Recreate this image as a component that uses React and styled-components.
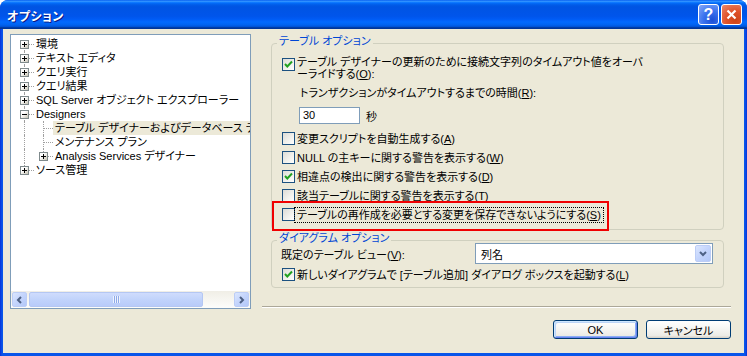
import React from "react";
import styled, { createGlobalStyle } from "styled-components";

const FONT = `"Liberation Sans", "Noto Sans CJK JP", sans-serif`;

const GlobalStyle = createGlobalStyle`
  html, body {
    margin: 0;
    padding: 0;
    background: #ffffff;
  }
  body {
    font-family: ${FONT};
    font-size: 11px;
    font-feature-settings: "palt";
    color: #000;
  }
  * {
    box-sizing: border-box;
  }
`;

const Window = styled.div`
    width: 747px;
    height: 356px;
    display: flex;
    flex-direction: column;
    border-radius: 8px 8px 0 0;
    overflow: hidden;
    background: linear-gradient(to right, #0831d9 0, #0855ea 2px, #0855ea calc(100% - 2px), #0831d9 100%);
`;

const TitleBar = styled.div`
    height: 29px;
    flex: none;
    display: flex;
    align-items: center;
    padding: 0 5px 0 7px;
    background: linear-gradient(to bottom, #0058ee 0%, #3593ff 4%, #288eff 6%, #127dff 8%, #036ffc 10%, #0262ee 14%, #0057e5 20%, #0054e3 24%, #0055eb 56%, #005bf5 66%, #026afe 76%, #0062ef 86%, #0052d6 92%, #0040ab 94%, #003092 100%);
`;

const TitleText = styled.div`
    flex: 1;
    color: #fff;
    font-weight: bold;
    font-size: 12px;
    letter-spacing: 0.5px;
    text-shadow: 1px 1px 0 #0a1883;
    padding-top: 1px;
`;

const CaptionButton = styled.div`
    width: 21px;
    height: 21px;
    margin-left: 2px;
    border: 1px solid #fff;
    border-radius: 3px;
    display: flex;
    align-items: center;
    justify-content: center;
    color: #fff;
    font-family: "Liberation Sans", sans-serif;
    font-weight: bold;
    font-size: 16px;
    background: ${({ $close }) => $close
        ? 'radial-gradient(circle at 70% 80%, #cc4418 0%, #e0522a 45%, #ec8a6e 100%)'
        : 'radial-gradient(circle at 70% 80%, #1b4fd6 0%, #3a72ee 45%, #86a9f8 100%)'};
`;

const Client = styled.div`
    flex: 1;
    margin: 0 3px 3px 3px;
    background: #ece9d8;
    padding: 5px 13px 0 7px;
    display: flex;
    flex-direction: column;
`;

const TopRow = styled.div`
    display: flex;
    height: 275px;
    flex: none;
`;

/* ---------- tree ---------- */

const TreeBox = styled.div`
    width: 241px;
    height: 275px;
    flex: none;
    border: 1px solid #7f9db9;
    background: #fff;
    display: flex;
    flex-direction: column;
`;

const TreeList = styled.div`
    flex: 1;
    overflow: hidden;
    padding: 2px 0 0 4px;
`;

const TreeRow = styled.div`
    height: 14px;
    display: flex;
    white-space: nowrap;
`;

const Guide = styled.span`
    position: relative;
    width: 19px;
    flex: none;
    &::before {
        content: "";
        display: ${({ $line }) => $line ? 'block' : 'none'};
        position: absolute;
        left: 9px;
        top: 0;
        bottom: 0;
        border-left: 1px dotted #a0a0a0;
    }
`;

const Joint = styled.span`
    position: relative;
    width: 19px;
    flex: none;
    &::before {
        content: "";
        position: absolute;
        left: 9px;
        top: ${({ $up }) => $up ? 0 : 7}px;
        bottom: ${({ $down }) => $down ? 0 : 7}px;
        border-left: 1px dotted #a0a0a0;
    }
    &::after {
        content: "";
        position: absolute;
        left: 10px;
        right: 0;
        top: 7px;
        border-top: 1px dotted #a0a0a0;
    }
`;

const Expander = styled.span`
    position: absolute;
    left: 5px;
    top: 3px;
    width: 9px;
    height: 9px;
    z-index: 1;
    border: 1px solid #7f8a8c;
    background: linear-gradient(135deg, #ffffff 35%, #c8c4b4 100%);
    &::before {
        content: "";
        position: absolute;
        left: 1px;
        top: 3px;
        width: 5px;
        height: 1px;
        background: #000;
    }
    &::after {
        content: "";
        display: ${({ $open }) => $open ? 'none' : 'block'};
        position: absolute;
        left: 3px;
        top: 1px;
        width: 1px;
        height: 5px;
        background: #000;
    }
`;

const TreeLabel = styled.span`
    line-height: 14px;
    padding: 0 2px;
    background: ${({ $selected }) => $selected ? '#ece9d8' : 'transparent'};
`;

const HScroll = styled.div`
    height: 17px;
    flex: none;
    display: flex;
    align-items: center;
    padding: 0 1px;
    gap: 2px;
    background: linear-gradient(to bottom, #f0eee6, #fdfdfb);
`;

const ScrollButton = styled.span`
    width: 15px;
    height: 15px;
    flex: none;
    display: flex;
    align-items: center;
    justify-content: center;
    border: 1px solid #bccdf6;
    border-radius: 2px;
    background: linear-gradient(135deg, #dbe6fe 0%, #c3d4fc 50%, #b3c8f8 100%);
`;

const Thumb = styled.span`
    width: ${({ $width }) => $width}px;
    height: 15px;
    flex: none;
    display: flex;
    align-items: center;
    justify-content: center;
    border: 1px solid #b4c7f3;
    border-radius: 2px;
    background: linear-gradient(to bottom, #cfdcfd 0%, #c1d3fb 50%, #b8cbf9 100%);
`;

const Grip = styled.span`
    width: 7px;
    height: 7px;
    background: repeating-linear-gradient(to right, #eef3fe 0, #eef3fe 1px, #8faae8 1px, #8faae8 2px);
`;

const ScrollTrack = styled.span`
    flex: 1;
`;

/* ---------- options side ---------- */

const Side = styled.div`
    flex: 1;
    margin-left: 11px;
    display: flex;
    flex-direction: column;
`;

const Group = styled.div`
    margin: ${({ $mt }) => $mt}px 7px 0 9px;
    border: 1px solid #d0d0bf;
    border-radius: 4px;
    padding-bottom: ${({ $pb }) => $pb}px;
`;

const GroupTitle = styled.div`
    width: fit-content;
    margin: -9px 0 0 5px;
    padding: 0 2px;
    line-height: 12px;
    background: #ece9d8;
    color: #0046d5;
`;

const CheckRow = styled.div`
    position: relative;
    display: flex;
    align-items: ${({ $top }) => $top ? 'flex-start' : 'center'};
    height: ${({ $top }) => $top ? 'auto' : '19px'};
    margin-top: ${({ $mt }) => $mt || 0}px;
    padding-left: 10px;
`;

const Box = styled.span`
    width: 13px;
    height: 13px;
    flex: none;
    margin-top: ${({ $mt }) => $mt || 0}px;
    border: 1px solid #1c5180;
    background: linear-gradient(135deg, #dcdcd7 0%, #f2f2ee 60%, #ffffff 100%);
    display: flex;
    align-items: center;
    justify-content: center;
`;

const Label = styled.span`
    padding: 0 2px;
    line-height: ${({ $lh }) => $lh || 14}px;
    white-space: nowrap;
    outline: ${({ $focus }) => $focus ? '1px dotted #000' : 'none'};
`;

const SubLabel = styled.div`
    margin-top: 6px;
    padding-left: 28px;
    line-height: 14px;
    white-space: nowrap;
`;

const InputRow = styled.div`
    display: flex;
    align-items: center;
    margin-top: 7px;
    padding-left: 27px;
    gap: 6px;
`;

const TextBox = styled.div`
    width: 61px;
    height: 17px;
    border: 1px solid #7f9db9;
    background: #fff;
    padding-left: 3px;
    line-height: 15px;
`;

const CheckList = styled.div`
    margin-top: 5px;
`;

const Annotation = styled.div`
    position: absolute;
    left: 0;
    top: -4px;
    width: 337px;
    height: 30px;
    border: 2px solid #f00000;
    pointer-events: none;
    z-index: 2;
`;

const ViewRow = styled.div`
    display: flex;
    align-items: center;
    height: 21px;
    margin-top: -1px;
    padding-left: 9px;
`;

const ViewLabel = styled.span`
    width: 194px;
    flex: none;
    white-space: nowrap;
`;

const Select = styled.div`
    width: 238px;
    height: 21px;
    border: 1px solid #7f9db9;
    background: #fff;
    display: flex;
    align-items: center;
    padding: 1px;
`;

const SelectValue = styled.span`
    flex: 1;
    padding-left: 4px;
`;

const DropButton = styled(ScrollButton)`
    width: 16px;
    height: 17px;
`;

const Separator = styled.div`
    margin-top: 18px;
    height: 2px;
    border-top: 1px solid #aca899;
    border-bottom: 1px solid #ffffff;
`;

const ButtonRow = styled.div`
    display: flex;
    justify-content: flex-end;
    gap: 8px;
    margin-top: 11px;
`;

const Button = styled.div`
    width: 85px;
    height: 19px;
    border: 1px solid #003c74;
    border-radius: 3px;
    display: flex;
    align-items: center;
    justify-content: center;
    background: linear-gradient(to bottom, #ffffff 0%, #f7f7f4 40%, #ecebe6 85%, #d6d0c5 100%);
    box-shadow: ${({ $default }) => $default
        ? 'inset 1px 1px 0 #cee7ff, inset -1px -1px 0 #6982ee, inset 2px 2px 0 #bcd4f6, inset -2px -2px 0 #89adf4'
        : 'none'};
`;

const Check = () => (
    <svg width="11" height="11" viewBox="0 0 11 11">
        <polyline points="2,5 4.3,7.5 9,2.5" fill="none" stroke="#21a121" strokeWidth="2" />
    </svg>
);

const Chevron = ({ dir }) => {
    const pts = {
        left: "5,1 2,4 5,7",
        right: "2,1 5,4 2,7",
        down: "1,2 4,5 7,2",
    }[dir];
    return (
        <svg width="8" height="8" viewBox="0 0 8 8">
            <polyline points={pts} fill="none" stroke="#4d6185" strokeWidth="2" />
        </svg>
    );
};

const tree = [
    { text: "環境", level: 0, box: "plus", up: false, down: true },
    { text: "テキスト エディタ", level: 0, box: "plus", up: true, down: true },
    { text: "クエリ実行", level: 0, box: "plus", up: true, down: true },
    { text: "クエリ結果", level: 0, box: "plus", up: true, down: true },
    { text: "SQL Server オブジェクト エクスプローラー", level: 0, box: "plus", up: true, down: true },
    { text: "Designers", level: 0, box: "minus", up: true, down: true },
    { text: "テーブル デザイナーおよびデータベース デザイナー", level: 1, up: true, down: true, selected: true },
    { text: "メンテナンス プラン", level: 1, up: true, down: true },
    { text: "Analysis Services デザイナー", level: 1, box: "plus", up: true, down: false },
    { text: "ソース管理", level: 0, box: "plus", up: true, down: false },
];

const OptionCheck = ({ checked, children, focus, mt, annotate }) => (
    <CheckRow $mt={mt}>
        <Box>{checked && <Check />}</Box>
        <Label $focus={focus}>{children}</Label>
        {annotate && <Annotation />}
    </CheckRow>
);

export default function App() {
    return (
        <>
            <GlobalStyle />
            <Window>
                <TitleBar>
                    <TitleText>オプション</TitleText>
                    <CaptionButton>?</CaptionButton>
                    <CaptionButton $close>
                        <svg width="11" height="11" viewBox="0 0 11 11">
                            <path d="M1.5 1.5 L9.5 9.5 M9.5 1.5 L1.5 9.5" stroke="#fff" strokeWidth="2.2" />
                        </svg>
                    </CaptionButton>
                </TitleBar>
                <Client>
                    <TopRow>
                        <TreeBox>
                            <TreeList>
                                {tree.map((item) => (
                                    <TreeRow key={item.text}>
                                        {item.level === 1 && <Guide $line />}
                                        <Joint $up={item.up} $down={item.down}>
                                            {item.box && <Expander $open={item.box === "minus"} />}
                                        </Joint>
                                        <TreeLabel $selected={item.selected}>{item.text}</TreeLabel>
                                    </TreeRow>
                                ))}
                            </TreeList>
                            <HScroll>
                                <ScrollButton><Chevron dir="left" /></ScrollButton>
                                <Thumb $width={174}><Grip /></Thumb>
                                <ScrollTrack />
                                <ScrollButton><Chevron dir="right" /></ScrollButton>
                            </HScroll>
                        </TreeBox>
                        <Side>
                            <Group $mt={9} $pb={5}>
                                <GroupTitle>テーブル オプション</GroupTitle>
                                <CheckRow $top $mt={9}>
                                    <Box $mt={2}><Check /></Box>
                                    <Label $lh={12}>
                                        テーブル デザイナーの更新のために接続文字列のタイムアウト値をオーバ
                                        <br />
                                        ーライドする(<u>O</u>):
                                    </Label>
                                </CheckRow>
                                <SubLabel>トランザクションがタイムアウトするまでの時間(<u>R</u>):</SubLabel>
                                <InputRow>
                                    <TextBox>30</TextBox>
                                    <span>秒</span>
                                </InputRow>
                                <CheckList>
                                    <OptionCheck>変更スクリプトを自動生成する(<u>A</u>)</OptionCheck>
                                    <OptionCheck>NULL の主キーに関する警告を表示する(<u>W</u>)</OptionCheck>
                                    <OptionCheck checked>相違点の検出に関する警告を表示する(<u>D</u>)</OptionCheck>
                                    <OptionCheck>該当テーブルに関する警告を表示する(<u>T</u>)</OptionCheck>
                                    <OptionCheck focus annotate>
                                        テーブルの再作成を必要とする変更を保存できないようにする(<u>S</u>)
                                    </OptionCheck>
                                </CheckList>
                            </Group>
                            <Group $mt={10} $pb={3}>
                                <GroupTitle>ダイアグラム オプション</GroupTitle>
                                <ViewRow>
                                    <ViewLabel>既定のテーブル ビュー(<u>V</u>):</ViewLabel>
                                    <Select>
                                        <SelectValue>列名</SelectValue>
                                        <DropButton><Chevron dir="down" /></DropButton>
                                    </Select>
                                </ViewRow>
                                <OptionCheck checked mt={1}>
                                    新しいダイアグラムで [テーブル追加] ダイアログ ボックスを起動する(<u>L</u>)
                                </OptionCheck>
                            </Group>
                            <Separator />
                        </Side>
                    </TopRow>
                    <ButtonRow>
                        <Button $default>OK</Button>
                        <Button>キャンセル</Button>
                    </ButtonRow>
                </Client>
            </Window>
        </>
    );
}
